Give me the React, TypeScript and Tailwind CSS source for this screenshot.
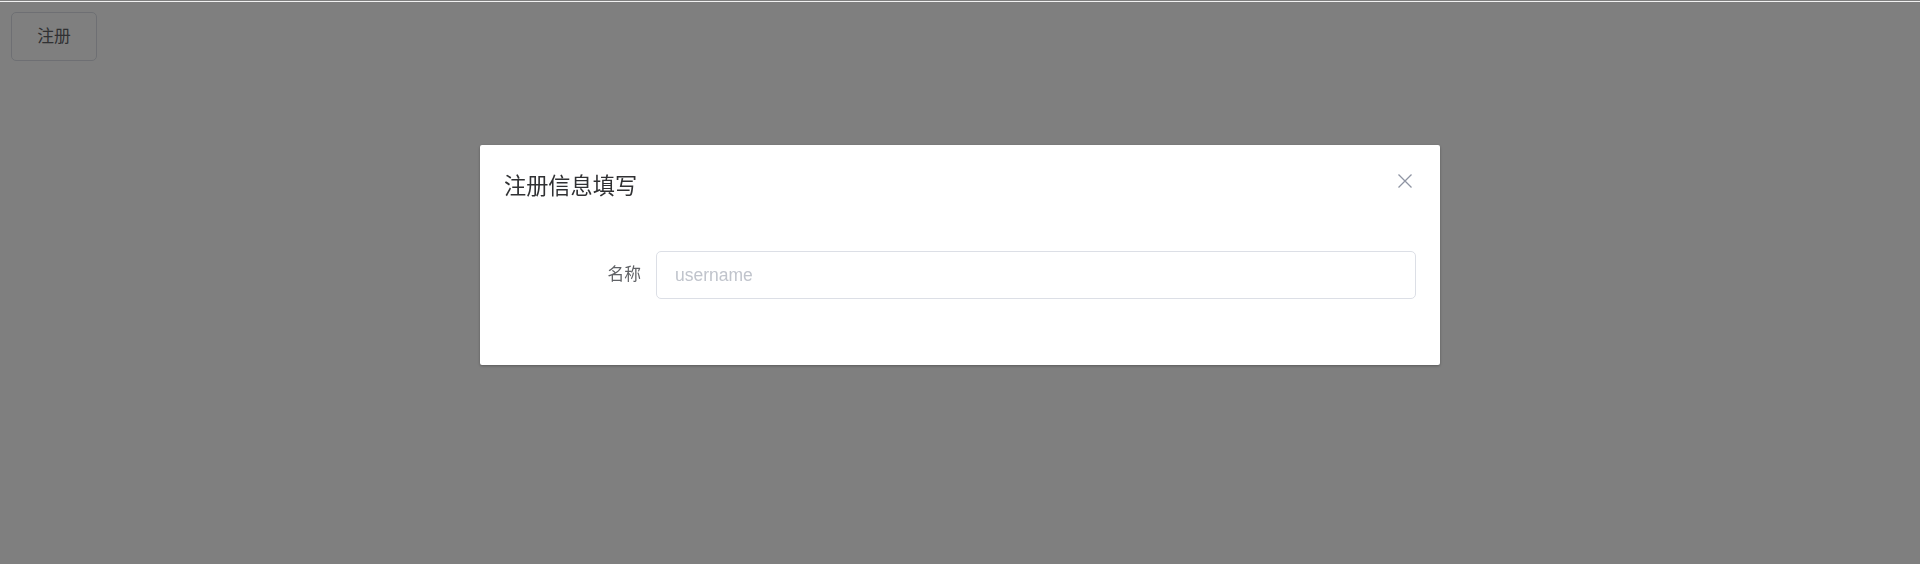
import React from 'react';

const font = { fontFamily: '"Liberation Sans", "Noto Sans CJK SC", sans-serif' };

export default function App() {
  return (
    <div className="relative min-h-screen bg-white" style={font}>
      <div className="pl-[11px] pt-[12px]">
        <button className="h-[49px] w-[86px] rounded-[5px] border border-[#dcdfe6] bg-white text-[16.8px] text-[#606266]">
          注册
        </button>
      </div>

      <div className="fixed inset-0 flex justify-center bg-black/50 pt-[145px]">
        <div className="relative h-fit w-[960px] rounded-[2px] bg-white shadow-[0_1px_3px_rgba(0,0,0,0.3)]">
          <div className="px-[24px] pb-[9px] pt-[27px]">
            <span className="text-[22.2px] leading-[29px] text-[#303133]">注册信息填写</span>
          </div>
          <button className="absolute right-[25px] top-[26px] flex h-[20px] w-[20px] items-center justify-center">
            <svg width="20" height="20" viewBox="0 0 20 20" fill="none" stroke="#8f94a3" strokeWidth="1.3">
              <path d="M3.5 3.5l13 13M16.5 3.5l-13 13" />
            </svg>
          </button>

          <div className="px-[24px] pb-[66px] pt-[41px]">
            <div className="flex h-[48px] items-center">
              <label className="w-[152px] pr-[15px] text-right text-[16.8px] text-[#606266]">名称</label>
              <input
                className="h-[48px] flex-1 rounded-[5px] border border-[#dcdfe6] px-[18px] text-[17.5px] text-[#606266] outline-none placeholder:text-[#c0c4cc]"
                placeholder="username"
              />
            </div>
          </div>
        </div>
      </div>

      <div className="fixed left-0 right-0 top-[1px] h-[1px] bg-[#f2f2f2]" />
    </div>
  );
}
